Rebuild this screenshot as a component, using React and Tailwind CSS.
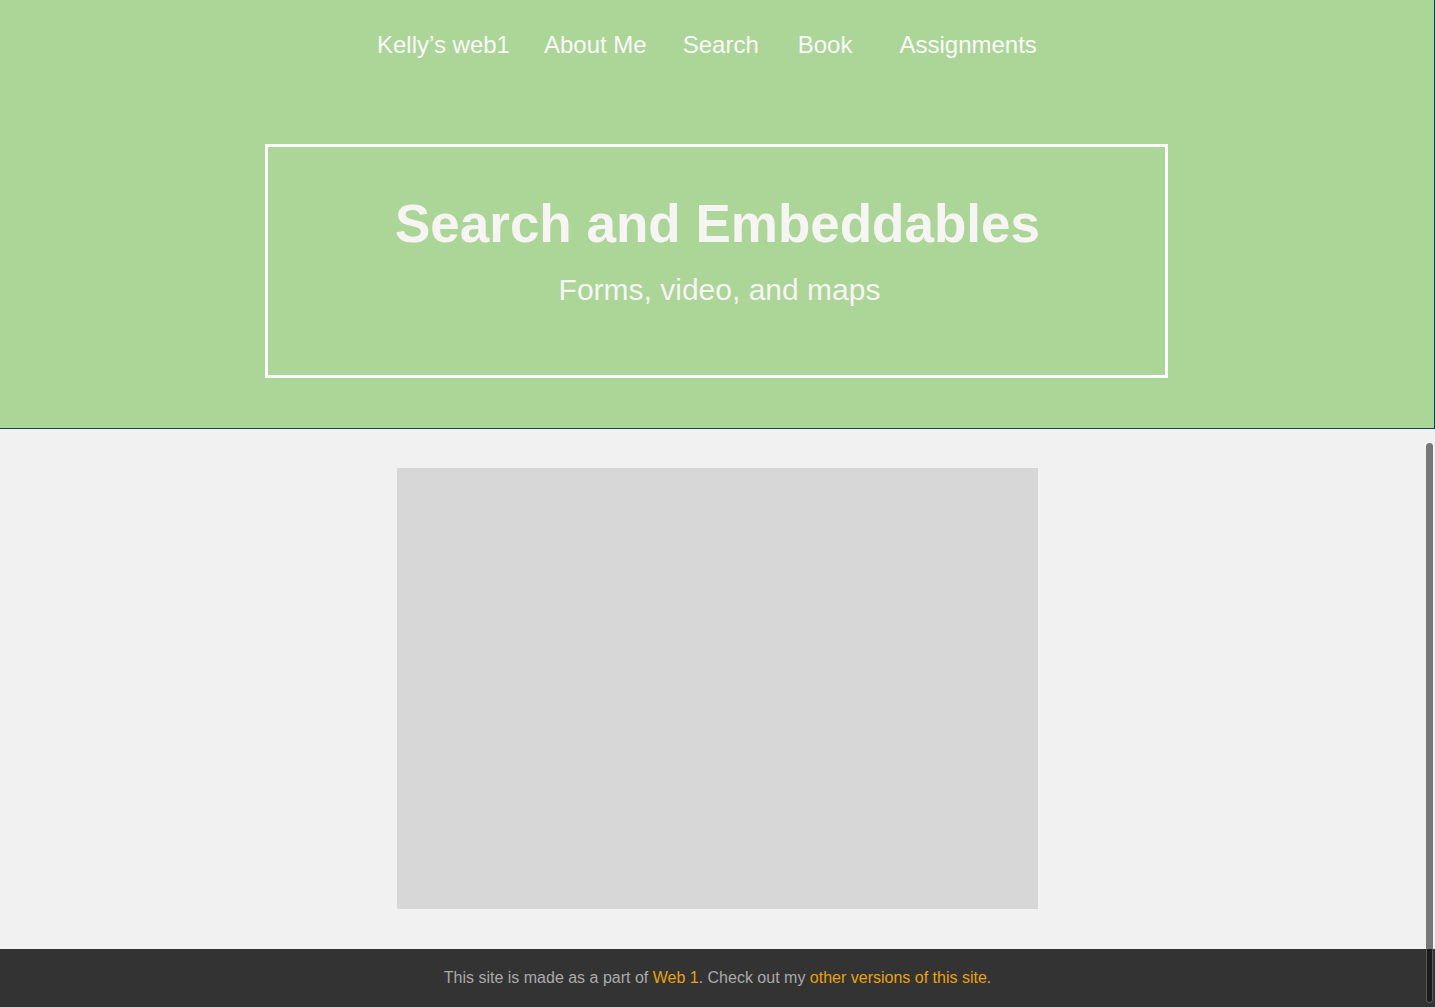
import * as React from 'react';

const navItems = [
  { label: 'Kelly\u2019s web1', cls: '' },
  { label: 'About Me', cls: 'ml-[34px]' },
  { label: 'Search', cls: 'ml-[36px]' },
  { label: 'Book', cls: 'ml-[39px]' },
  { label: 'Assignments', cls: 'ml-[47px]' },
];

export default function App() {
  return (
    <div className="relative min-h-screen flex flex-col bg-[#f1f1f1] font-['Liberation_Sans',Arial,sans-serif]">
      <header className="h-[429px] bg-[#acd598] border-b border-r border-[#123f5a] flex flex-col">
        <nav className="flex pl-[377px] pt-[31px] text-[24px] leading-[28px] text-[#fbfafa]">
          {navItems.map((item) => (
            <a key={item.label} href="#" className={item.cls}>
              {item.label}
            </a>
          ))}
        </nav>
        <div className="mt-[85px] ml-[265px] w-[903px] h-[234px] border-[3px] border-white flex flex-col items-center pt-[50px] text-[#f7f4f4]">
          <h1 className="pl-[2px] text-[53px] leading-none font-bold">Search and Embeddables</h1>
          <p className="mt-[25px] pl-[6px] text-[30px] leading-none">Forms, video, and maps</p>
        </div>
      </header>

      <main className="flex-1 flex justify-center pt-[39px] pb-[40px]">
        <div className="w-[641px] h-[441px] bg-[#d7d7d7]" />
      </main>

      <footer className="h-[58px] bg-[#333333] flex items-center justify-center text-[16px] text-[#aaaaaa]">
        <p>
          This site is made as a part of <a href="#" className="text-[#e8a20c]">Web 1</a>. Check out my{' '}
          <a href="#" className="text-[#e8a20c]">other versions of this site</a>.
        </p>
      </footer>

      {/* overlay scrollbar thumb */}
      <div className="absolute right-[2px] top-[443px] bottom-[4px] w-[7px] flex flex-col pointer-events-none">
        <div className="flex-1 bg-[#777777] rounded-t-full" />
        <div className="h-[54px] bg-[#1b1b1b] border border-t-0 border-[#5a5a5a] rounded-b-full" />
      </div>
    </div>
  );
}
